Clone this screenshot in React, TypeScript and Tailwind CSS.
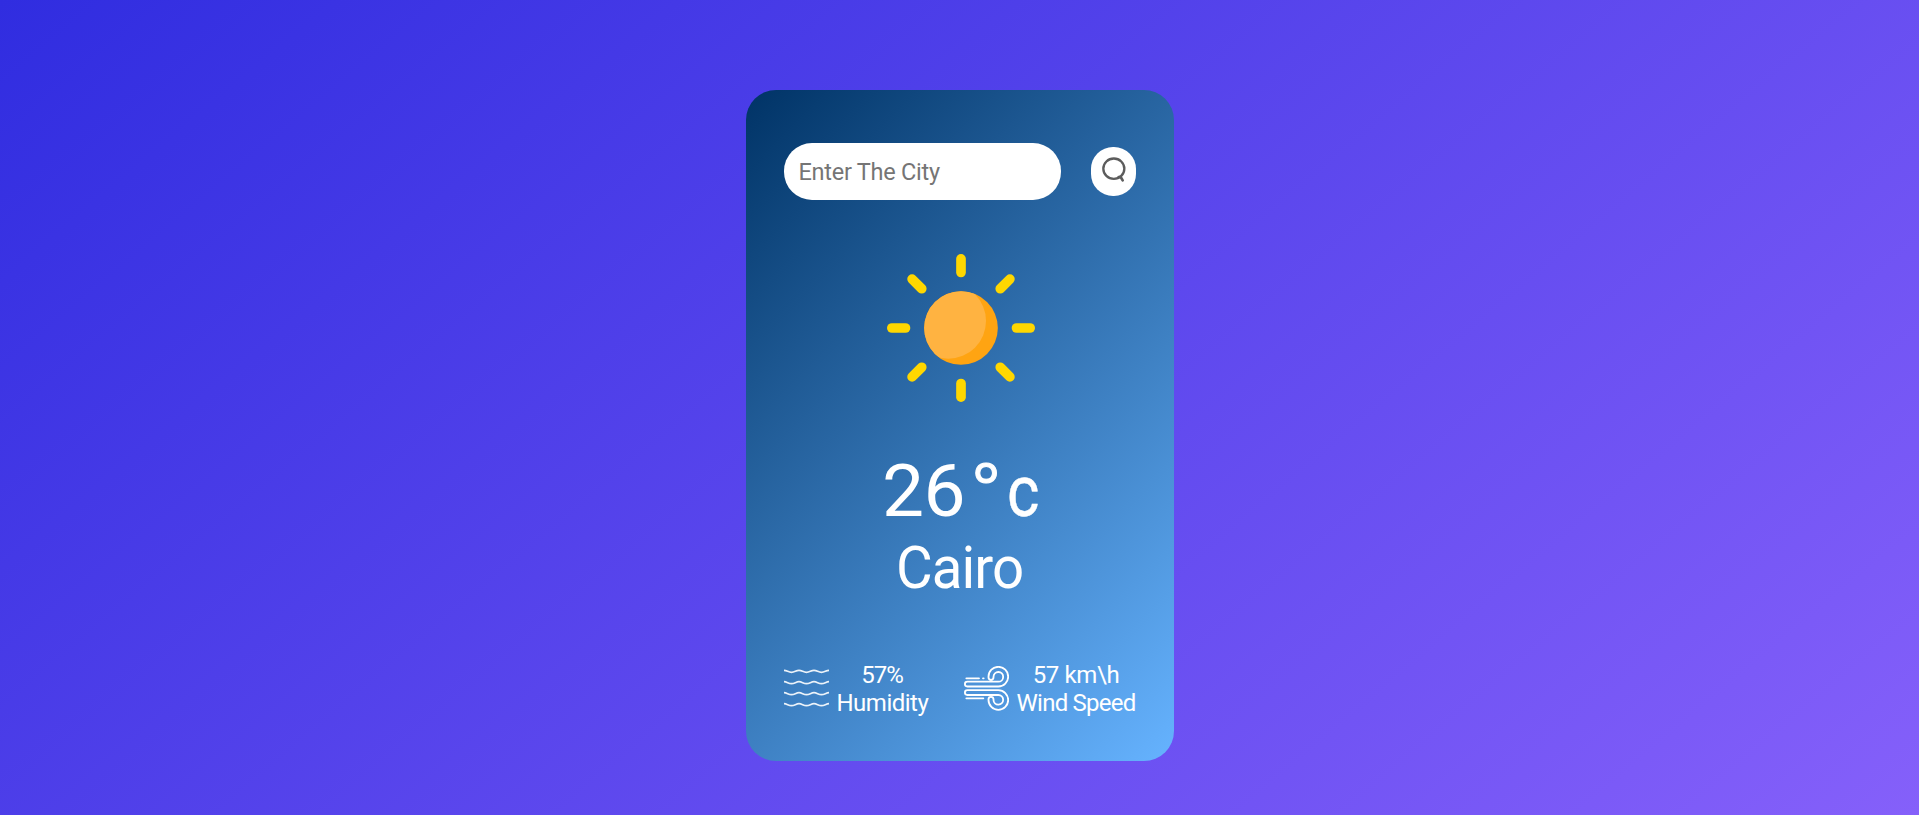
import React from "react";

const RAY_ANGLES = [0, 45, 90, 135, 180, 225, 270, 315];

function SearchIcon() {
  return (
    <svg width="24" height="26" viewBox="0 0 72 78" fill="none" stroke="#5c5c5c" className="ml-px block">
      <ellipse cx="35.500" cy="35" rx="31.500" ry="30.500" strokeWidth="7" />
      <path d="M50 60 L56 60 L62 70" strokeWidth="8" strokeLinecap="round" strokeLinejoin="round" />
    </svg>
  );
}

function SunIcon() {
  return (
    <svg width="148" height="148" viewBox="-222 -222 444 444" className="block">
      <defs>
        <clipPath id="disc">
          <circle r="110.500" />
        </clipPath>
      </defs>
      <circle r="110.500" fill="#ffa412" />
      <circle cx="-38" cy="-21" r="113" fill="#ffb341" clipPath="url(#disc)" />
      {RAY_ANGLES.map((a) => (
        <rect key={a} x="-14.500" y="-222" width="29" height="70" rx="14.500" fill="#ffd700" transform={`rotate(${a})`} />
      ))}
    </svg>
  );
}

function HumidityIcon() {
  return (
    <svg width="45" height="45" viewBox="0 0 135 135" fill="none" stroke="#fff" strokeOpacity="0.9" strokeWidth="5" className="block">
      {[16, 50, 83, 116].map((y) => (
        <path
          key={y}
          d={`M0 ${y - 3} C9 ${y - 3} 13 ${y + 3} 22.500 ${y + 3} S36 ${y - 3} 45 ${y - 3} S58 ${y + 3} 67.500 ${y + 3} S81 ${y - 3} 90 ${y - 3} S103 ${y + 3} 112.500 ${y + 3} S126 ${y - 3} 135 ${y - 3}`}
        />
      ))}
    </svg>
  );
}

function WindIcon() {
  const gust =
    "M10 47 H103 A14.500 14.500 0 1 0 88.500 32 V34 A7.500 7.500 0 0 1 73.500 34 V32 A29.500 29.500 0 1 1 103 61.500 H10 A7.250 7.250 0 0 1 10 47 Z";
  return (
    <svg width="45" height="45" viewBox="0 0 135 135" fill="none" stroke="#fff" strokeWidth="5.500" strokeLinecap="round" className="block">
      <path d={gust} />
      <path d={gust} transform="matrix(1 0 0 -1 0 134)" />
      <path d="M7 37 H45 M57 37 H59 M7 97 H58" />
    </svg>
  );
}

export default function App() {
  return (
    <main className="flex h-[815px] w-full justify-center bg-[linear-gradient(140deg,#302de0,#8560fa)] pt-[90px] font-['Roboto',sans-serif] text-white">
      <section className="flex h-[671px] w-[428px] flex-col items-center rounded-[30px] bg-[linear-gradient(135deg,#003366,#66b3ff)] px-[38px] pt-[53px]">
        <form className="flex w-full items-center justify-between" onSubmit={(e) => e.preventDefault()}>
          <input
            type="text"
            placeholder="Enter The City"
            className="h-[57px] w-[277px] rounded-[28px] bg-white px-[15px] text-[23.5px] font-normal tracking-[-0.25px] text-[#555] outline-none placeholder:text-[#757575]"
          />
          <button type="submit" aria-label="Search" className="flex h-[49px] w-[45px] justify-center rounded-[22px] bg-white pt-[10px]">
            <SearchIcon />
          </button>
        </form>

        <div className="mt-[54px] ml-[2px]">
          <SunIcon />
        </div>

        <h1 className="mt-[50px] flex h-[80px] w-[153px] text-[72px] leading-[80px] font-normal">
          <span className="-ml-px inline-block origin-left scale-x-[1.04] tracking-[-0.5px]">26</span>
          <span className="-mt-[7px] ml-[10px] w-[30px] text-center font-['Open_Sans',sans-serif] text-[66px] [-webkit-text-stroke:1px_white]">°</span>
          <span className="ml-[7px] inline-block origin-left scale-x-[0.86] [-webkit-text-stroke:0.5px_white]">c</span>
        </h1>
        <h2 className="h-[72px] origin-center scale-x-[0.94] text-[60px] leading-[72px] font-normal tracking-[-1px]">Cairo</h2>

        <div className="mt-[57px] flex w-full justify-between text-center text-[24px] leading-[28px]">
          <div className="flex gap-2">
            <div className="pt-[5px]">
              <HumidityIcon />
            </div>
            <div className="w-[91px] whitespace-nowrap">
              <p className="tracking-[-1px]">57%</p>
              <p className="tracking-[-0.5px]">Humidity</p>
            </div>
          </div>
          <div className="flex gap-2">
            <div className="pt-[5px]">
              <WindIcon />
            </div>
            <div className="w-[119px] whitespace-nowrap">
              <p className="tracking-[-0.4px]">57 km\h</p>
              <p className="tracking-[-0.75px]">Wind Speed</p>
            </div>
          </div>
        </div>
      </section>
    </main>
  );
}
